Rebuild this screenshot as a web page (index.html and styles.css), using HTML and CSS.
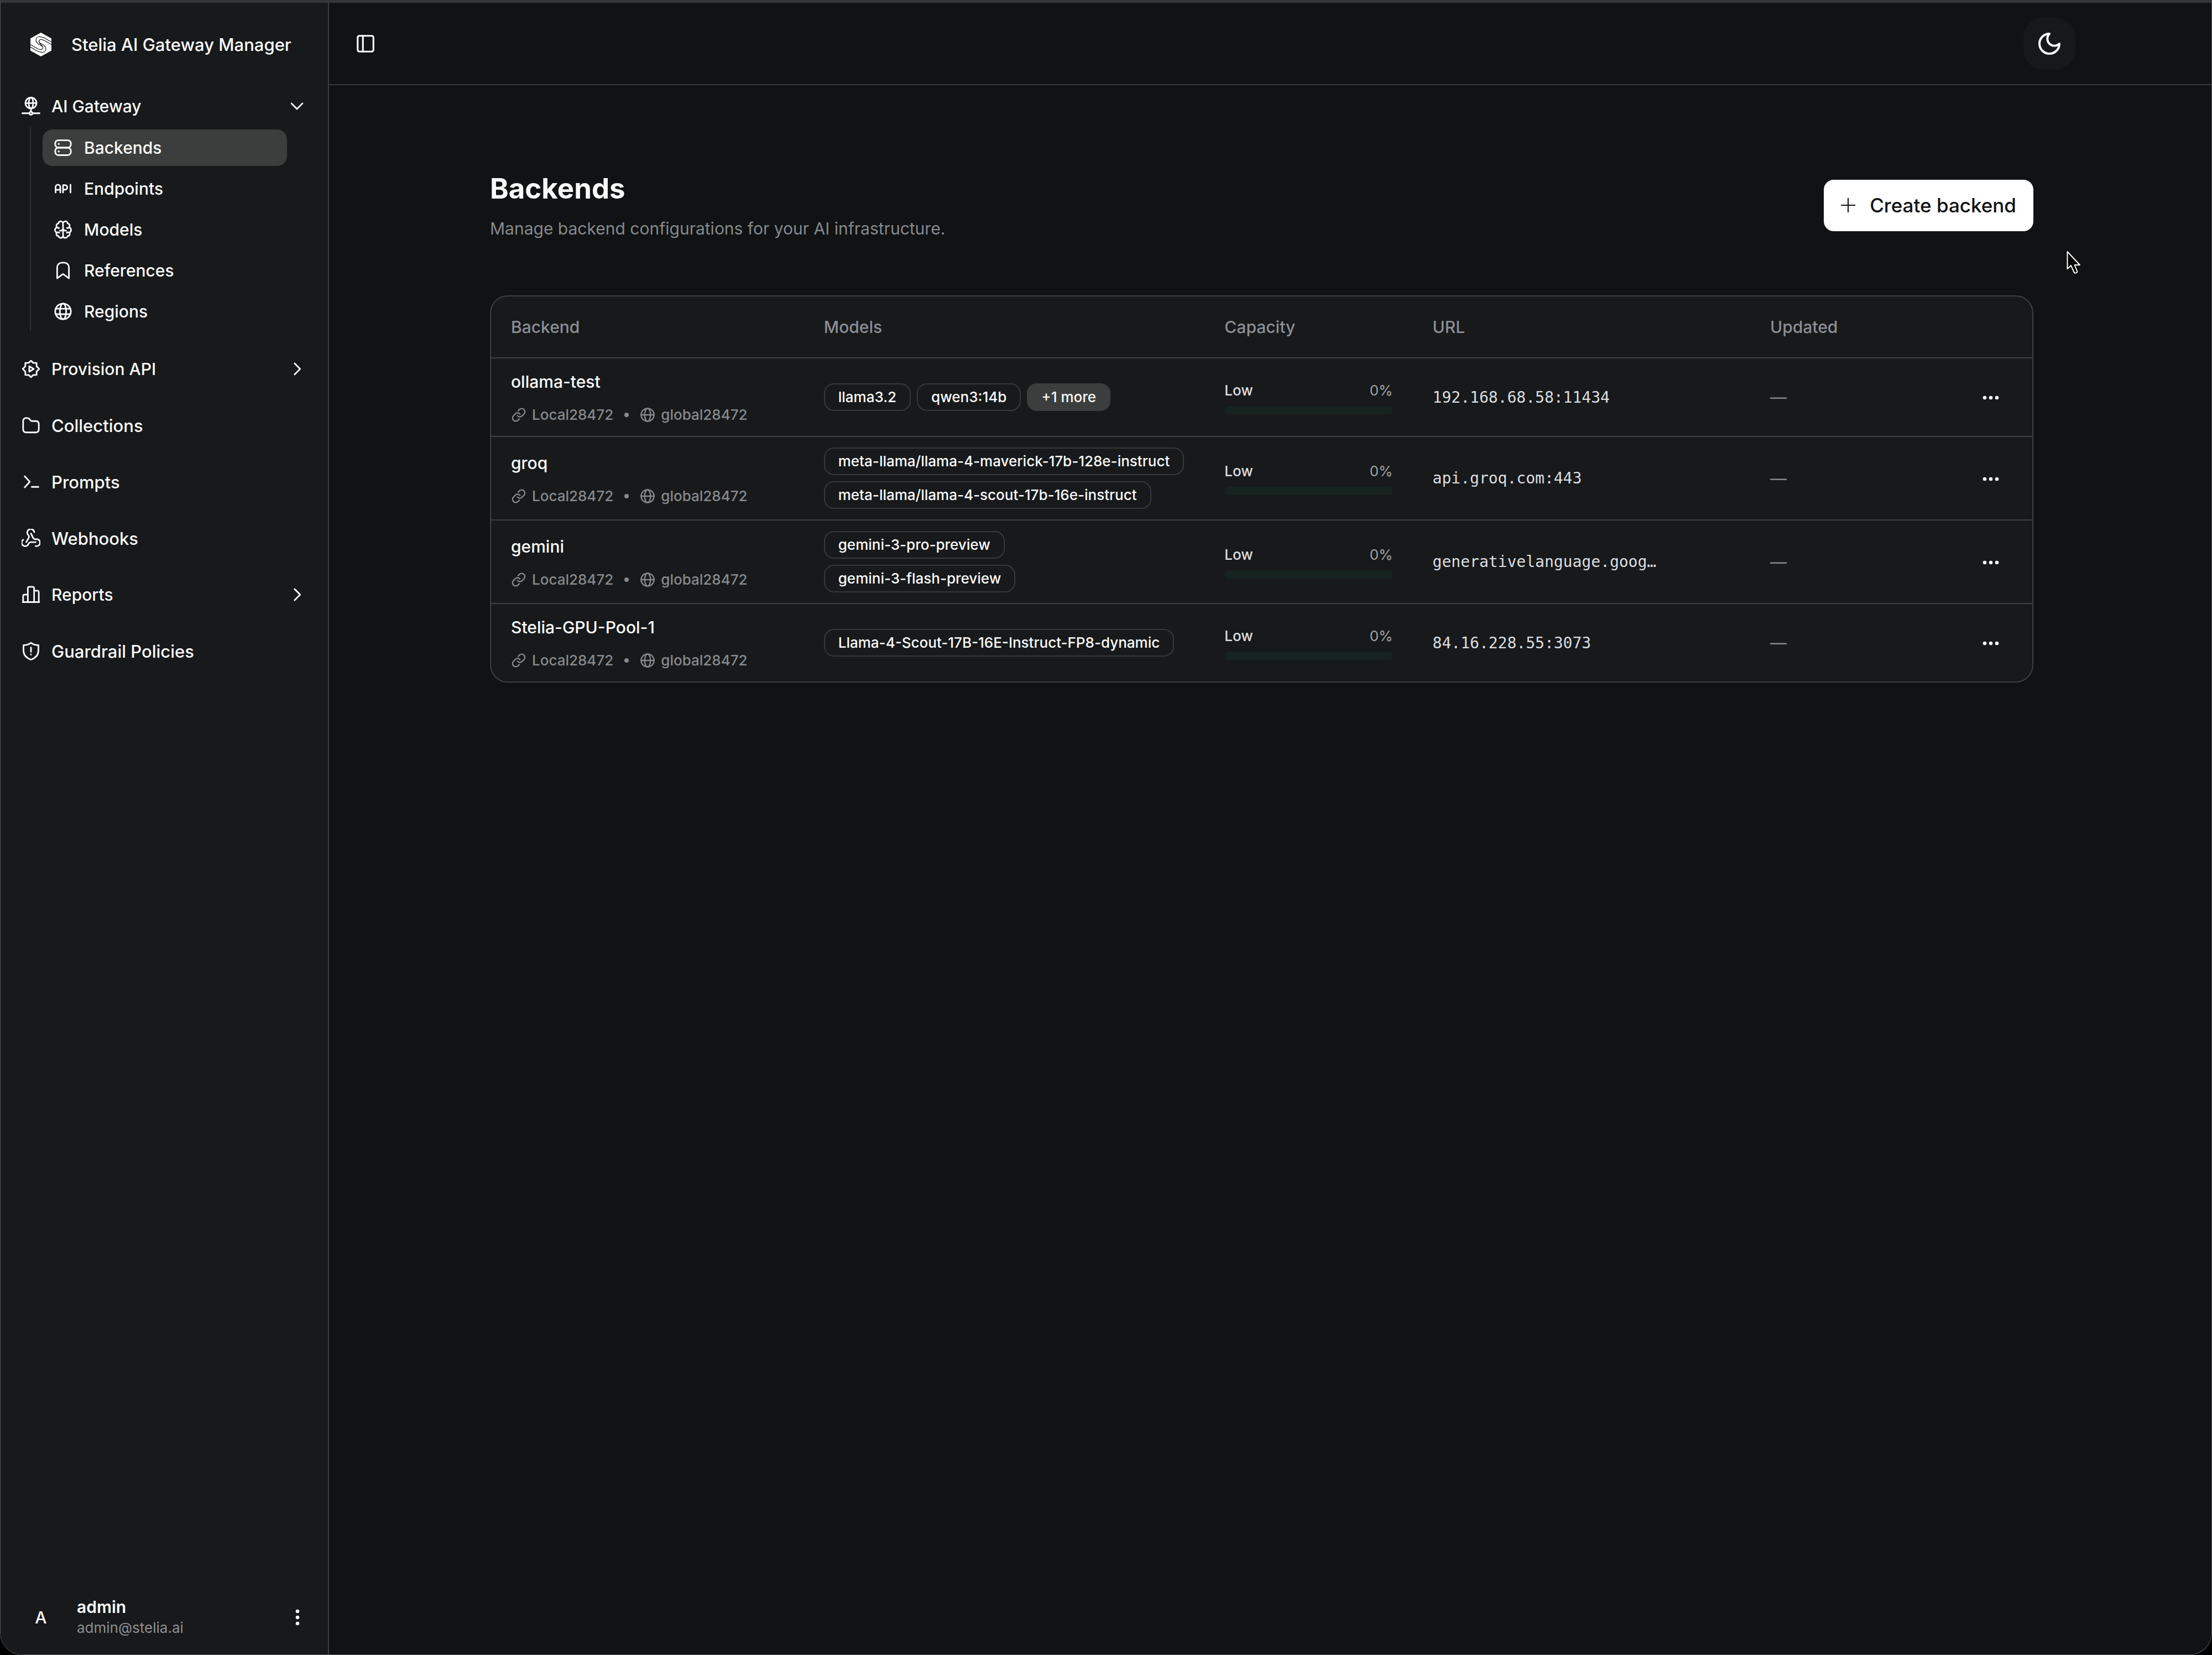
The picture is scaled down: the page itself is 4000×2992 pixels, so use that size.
FILE: index.html
```html
<!DOCTYPE html>
<html lang="en">
<head>
    <meta charset="UTF-8">
    <meta name="viewport" content="width=device-width, initial-scale=1.0">
    <title>Backends - Stelia AI Gateway Manager</title>
    <link rel="stylesheet" href="styles.css">
</head>
<body>

    <!-- shared icons -->
    <svg class="sprite" aria-hidden="true">
        <symbol id="i-right" viewBox="0 0 24 24"><path d="M9 5l7 7-7 7"/></symbol>
        <symbol id="i-link" viewBox="0 0 24 24"><path d="M10 13.2a4.8 4.8 0 0 0 7 .6l3.100-3.100a4.900 4.900 0 0 0-7-7l-2 2"/><path d="M14 10.800a4.800 4.800 0 0 0-7-.6l-3.100 3.100a4.900 4.900 0 0 0 7 7l2-2"/></symbol>
        <symbol id="i-globe" viewBox="0 0 24 24"><circle cx="12" cy="12" r="10"/><ellipse cx="12" cy="12" rx="4.500" ry="10"/><path d="M2 12h20"/></symbol>
        <symbol id="i-more" viewBox="0 0 36 36"><circle cx="7" cy="18" r="3.300"/><circle cx="18" cy="18" r="3.300"/><circle cx="29" cy="18" r="3.300"/></symbol>
        <symbol id="i-half-s" viewBox="0 0 40 43"><path d="M39 17L27 10Q12 3.500 11 13q0 5 5 8l7 4M39 21.500L26 14q-9-4-9.500 2 0 3 3.500 5"/></symbol>
    </svg>

    <div class="window">
        <aside class="sidebar">
            <div class="brand">
                <svg class="logo" viewBox="0 0 40 43">
                    <path class="logo-bg" d="M20 0l19 10.500v22L20 43 1 32.500v-22z"/>
                    <use href="#i-half-s"/>
                    <use href="#i-half-s" transform="rotate(180 20 21.500)"/>
                </svg>
                <span>Stelia AI Gateway Manager</span>
            </div>

            <nav class="nav">
                <div>
                    <button class="item" type="button" aria-expanded="true">
                        <svg class="icon" viewBox="0 0 24 24"><circle cx="12" cy="8" r="7"/><ellipse cx="12" cy="8" rx="2.800" ry="7"/><path d="M5 8h14M12 15V19M1 21H10M14 21h9"/><circle cx="12" cy="21" r="1.800"/></svg>
                        <span>AI Gateway</span>
                        <svg class="chevron" viewBox="0 0 24 24"><path d="M5 8.500l7 7 7-7"/></svg>
                    </button>
                    <ul class="sub">
                        <li><a class="sub-item active" href="#">
                            <svg class="icon" viewBox="0 0 24 24"><rect x="2" y="2.500" width="20" height="9.500" rx="4"/><rect x="2" y="12" width="20" height="9.500" rx="4"/><path d="M6.500 7.200v.1M6.500 16.700v.1" stroke-width="2.500"/></svg>
                            <span>Backends</span></a></li>
                        <li><a class="sub-item" href="#">
                            <svg class="icon" viewBox="0 0 24 24"><path d="M2.500 17v-7a3 3 0 0 1 6 0v7M2.500 13.500h6M12 17V7.500h2.500a2.900 2.900 0 0 1 0 5.800H12M21.500 7v10" stroke-width="2"/></svg>
                            <span>Endpoints</span></a></li>
                        <li><a class="sub-item" href="#">
                            <svg class="icon" viewBox="0 0 24 24"><path d="M12 4.500C12 .5 6 .5 6.200 4.200 3.500 4.500 2.800 7.500 4.200 9.200 1 10.500 1 14.500 4 15.800 2.500 18.500 4.500 20.500 6.200 20.300 7 23.500 12 23.500 12 19.500zM12 4.500C12 .5 18 .5 17.800 4.200 20.500 4.500 21.200 7.500 19.800 9.200 23 10.500 23 14.500 20 15.800 21.500 18.500 19.500 20.500 17.800 20.300 17 23.500 12 23.500 12 19.500M8 13.500q3.500 0 4-2.500.5 2.500 4 2.500M4.200 9.200q1 1 2.800.8M19.800 9.200q-1 1-2.800.8M4 15.800q1.500-.8 3.200.2M20 15.800q-1.500-.8-3.200.2"/></svg>
                            <span>Models</span></a></li>
                        <li><a class="sub-item" href="#">
                            <svg class="icon" viewBox="0 0 24 24"><path d="M4.500 22V8a6 6 0 0 1 6-6h3a6 6 0 0 1 6 6v14L12 16.500z"/></svg>
                            <span>References</span></a></li>
                        <li><a class="sub-item" href="#">
                            <svg class="icon" viewBox="0 0 24 24"><circle cx="12" cy="12" r="10"/><ellipse cx="12" cy="12" rx="4" ry="10"/><path d="M3 8.500h18M3 15.500h18"/></svg>
                            <span>Regions</span></a></li>
                    </ul>
                </div>
                <button class="item" type="button">
                    <svg class="icon" viewBox="0 0 24 24"><path d="M12 1.500l3 2.800h4.200v4.400L22.500 12l-3.300 3.300v4.400H15l-3 2.800-3-2.800H4.800v-4.400L1.500 12l3.300-3.300V4.300H9z"/><path d="M9.800 8.500v7L15.500 12z"/></svg>
                    <span>Provision API</span>
                    <svg class="chevron"><use href="#i-right"/></svg>
                </button>
                <a class="item" href="#">
                    <svg class="icon" viewBox="0 0 24 24"><path d="M2 7q0-4.500 4-4.500 3.500 0 4.500 2T13.500 6.500H18q4 0 4 4V17q0 4-4 4H6q-4 0-4-4z"/></svg>
                    <span>Collections</span>
                </a>
                <a class="item" href="#">
                    <svg class="icon" viewBox="0 0 24 24"><path d="M4 5l6.500 7L4 19M13 18.500h8.500"/></svg>
                    <span>Prompts</span>
                </a>
                <a class="item" href="#">
                    <svg class="icon" viewBox="0 0 24 24"><path d="M18 17h-6.500c-1.500 0-2 1-2.600 2A4.500 4.500 0 1 1 2 14"/><path d="M6 17l3.200-5.600c.7-1.200.2-2.300-.5-3.300A4.500 4.500 0 1 1 16.200 4.200"/><path d="M12 6l3 6c.7 1 1.500 1.300 2.700 1.400A4.500 4.500 0 1 1 18 22"/></svg>
                    <span>Webhooks</span>
                </a>
                <button class="item" type="button">
                    <svg class="icon" viewBox="0 0 24 24"><path d="M2 21.500V14q0-2 2-2h4v9.500M8 21.500V4q0-2 2-2h4q2 0 2 2v17.500M16 7h4q2 0 2 2v12.500M1.500 21.500h21"/></svg>
                    <span>Reports</span>
                    <svg class="chevron"><use href="#i-right"/></svg>
                </button>
                <a class="item" href="#">
                    <svg class="icon" viewBox="0 0 24 24"><path d="M12 1.500q4 3 9.500 3v7q0 8-9.500 11.500Q2.500 19.500 2.500 11.500v-7q5.500 0 9.500-3zM12 7.500V13M12 16.400v.1"/></svg>
                    <span>Guardrail Policies</span>
                </a>
            </nav>

            <div class="user">
                <span class="avatar">A</span>
                <div class="user-info">
                    <strong>admin</strong>
                    <small>admin@stelia.ai</small>
                </div>
                <button class="user-menu" type="button" aria-label="Account menu"><svg class="more vertical"><use href="#i-more"/></svg></button>
            </div>
        </aside>

        <div class="content">
            <header class="topbar">
                <button class="toggle" type="button" aria-label="Toggle sidebar">
                    <svg viewBox="0 0 24 24"><rect x="3" y="3" width="18" height="18" rx="2"/><path d="M9 3v18"/></svg>
                </button>
                <button class="theme" type="button" aria-label="Toggle theme">
                    <svg viewBox="0 0 24 24"><path d="M12 3a6 6 0 0 0 9 9 9 9 0 1 1-9-9Z"/></svg>
                </button>
            </header>

            <main class="page">
                <div class="page-head">
                    <div>
                        <h1>Backends</h1>
                        <p>Manage backend configurations for your AI infrastructure.</p>
                    </div>
                    <button class="create" type="button">
                        <svg viewBox="0 0 24 24"><path d="M12 0v24M0 12h24"/></svg>
                        <span>Create backend</span>
                    </button>
                </div>

                <div class="card">
                    <table>
                        <colgroup>
                            <col class="c-name"><col class="c-models"><col class="c-capacity"><col class="c-url"><col class="c-updated"><col class="c-menu">
                        </colgroup>
                        <thead>
                            <tr><th>Backend</th><th>Models</th><th>Capacity</th><th>URL</th><th>Updated</th><th></th></tr>
                        </thead>
                        <tbody id="rows"></tbody>
                    </table>
                </div>
            </main>
        </div>
    </div>

    <svg class="cursor" viewBox="0 0 26 42"><path d="M1.500 2v31l6.500-6 6 13q3.500 1.500 5.500-1.500L14.500 26H24z"/></svg>

    <script>
        const backends = [
            { name: 'ollama-test', models: ['llama3.2', 'qwen3:14b'], more: 1, url: '192.168.68.58:11434' },
            { name: 'groq', models: ['meta-llama/llama-4-maverick-17b-128e-instruct', 'meta-llama/llama-4-scout-17b-16e-instruct'], url: 'api.groq.com:443' },
            { name: 'gemini', models: ['gemini-3-pro-preview', 'gemini-3-flash-preview'], url: 'generativelanguage.goog…' },
            { name: 'Stelia-GPU-Pool-1', models: ['Llama-4-Scout-17B-16E-Instruct-FP8-dynamic'], url: '84.16.228.55:3073' }
        ];

        document.querySelector('#rows').innerHTML = backends.map(b => `
            <tr>
                <td>
                    <div class="name">${b.name}</div>
                    <div class="meta">
                        <svg><use href="#i-link"/></svg><span>Local28472</span>
                        <i class="dot"></i>
                        <svg><use href="#i-globe"/></svg><span>global28472</span>
                    </div>
                </td>
                <td>
                    <div class="chips ${b.more ? '' : 'stacked'}">
                        ${b.models.map(m => `<span class="chip">${m}</span>`).join('')}
                        ${b.more ? `<span class="chip filled">+${b.more} more</span>` : ''}
                    </div>
                </td>
                <td>
                    <div class="load"><span>Low</span><span class="percent">0%</span></div>
                    <div class="bar"></div>
                </td>
                <td class="url">${b.url}</td>
                <td class="updated">—</td>
                <td class="menu"><button type="button" aria-label="Actions for ${b.name}"><svg class="more"><use href="#i-more"/></svg></button></td>
            </tr>`).join('');
    </script>

</body>
</html>
```
FILE: styles.css
```css
* {
    margin: 0;
    padding: 0;
    box-sizing: border-box;
}

body {
    background: #000;
    color: #fafafa;
    font-family: Inter, "Liberation Sans", sans-serif;
    font-size: 30px;
    font-weight: 500;
}

button {
    background: none;
    border: none;
    color: inherit;
    font: inherit;
    cursor: pointer;
}

a {
    color: inherit;
    text-decoration: none;
}

ul {
    list-style: none;
}

svg {
    display: block;
    flex: none;
    fill: none;
    stroke: currentColor;
    stroke-width: 2;
    stroke-linecap: round;
    stroke-linejoin: round;
}

.sprite {
    position: absolute;
    width: 0;
    height: 0;
}

.window {
    display: flex;
    min-height: 100vh;
    background: #101213;
    border: 1px solid #55585a;
    border-top: 5px solid #343635;
    border-radius: 0 0 40px 40px;
    overflow: hidden;
}

/* sidebar */
.sidebar {
    display: flex;
    flex-direction: column;
    flex: none;
    width: 594px;
    background: #17191a;
    border-right: 2px solid #3c3e40;
}

.brand {
    display: flex;
    align-items: center;
    gap: 35px;
    height: 150px;
    padding: 0 0 0 53px;
    font-size: 31px;
}

.logo {
    width: 40px;
    height: 43px;
    stroke: #17191a;
    stroke-width: 1.2px;
}

.logo-bg {
    fill: #fff;
    stroke: none;
}

.nav {
    display: flex;
    flex-direction: column;
    gap: 36px;
    padding-top: 4px;
}

.item {
    display: flex;
    align-items: center;
    gap: 20px;
    width: 100%;
    height: 66px;
    padding: 0 39px 0 38px;
    text-align: left;
}

a.item {
    font-size: 31px;
}

.icon,
.chevron {
    width: 34px;
    height: 34px;
}

.chevron {
    margin-left: auto;
}

.sub {
    display: flex;
    flex-direction: column;
    gap: 8px;
    margin: 5px 74px 0 53px;
    padding: 4px 0 2px 21px;
    border-left: 2px solid #303234;
}

.sub-item {
    display: flex;
    align-items: center;
    gap: 21px;
    height: 66px;
    padding-left: 20px;
    border-radius: 18px;
}

.sub-item.active {
    background: #3c3e3d;
}

.user {
    display: flex;
    align-items: center;
    margin-top: auto;
    padding: 0 37px 29px 36px;
}

.avatar {
    width: 74px;
    text-align: center;
}

.user-info {
    display: flex;
    flex-direction: column;
    margin-left: 28px;
}

.user-info strong {
    font-weight: 600;
    line-height: 38px;
}

.user-info small {
    color: #8e9094;
    font-size: 26px;
    font-weight: 400;
    line-height: 38px;
}

.user-menu {
    margin-left: auto;
}

.more {
    width: 36px;
    height: 36px;
    fill: currentColor;
    stroke: none;
}

.vertical {
    transform: rotate(90deg);
}

/* top bar */
.content {
    flex: 1;
    min-width: 0;
}

.topbar {
    display: flex;
    align-items: center;
    justify-content: space-between;
    height: 149px;
    padding: 0 246px 0 47px;
    border-bottom: 2px solid #36383a;
}

.toggle svg {
    width: 38px;
    height: 38px;
}

.theme {
    padding: 23px;
    background: #16181a;
    border-radius: 36px;
}

.theme svg {
    width: 48px;
    height: 48px;
}

/* page */
.page {
    padding: 151px 322px 0 291px;
}

.page-head {
    display: flex;
    align-items: center;
    justify-content: space-between;
    margin-bottom: 97px;
}

h1 {
    font-size: 51px;
    font-weight: 700;
    line-height: 72px;
}

.page-head p {
    margin-top: 12px;
    color: #86898d;
    font-weight: 400;
    line-height: 48px;
}

.create {
    display: flex;
    align-items: center;
    gap: 26px;
    height: 93px;
    padding: 0 31px;
    background: #fff;
    border-radius: 18px;
    color: #101213;
    font-size: 35px;
}

.create svg {
    width: 26px;
    height: 26px;
    stroke-linecap: butt;
}

.card {
    background: #17191a;
    border: 2px solid #3d3f41;
    border-radius: 32px;
    overflow: hidden;
}

table {
    width: 100%;
    table-layout: fixed;
    border-collapse: collapse;
}

.c-name { width: 20.3%; }
.c-models { width: 26%; }
.c-capacity { width: 13.5%; }
.c-url { width: 21.9%; }
.c-menu { width: 5.4%; }

th {
    height: 111px;
    padding: 0 36px;
    color: #8b8e96;
    font-weight: 500;
    text-align: left;
}

td {
    padding: 19px 36px;
    border-top: 2px solid #3d3f41;
    white-space: nowrap;
}

.name {
    line-height: 46px;
}

.meta {
    display: flex;
    align-items: center;
    gap: 10px;
    margin-top: 18px;
    color: #86898d;
    font-size: 26px;
    line-height: 38px;
}

.meta svg {
    width: 28px;
    height: 28px;
}

.dot {
    width: 8px;
    height: 8px;
    margin: 0 10px;
    background: #86898d;
    border-radius: 50%;
}

.chips {
    display: flex;
    align-items: flex-start;
    gap: 11px;
}

.stacked {
    flex-direction: column;
}

.chip {
    padding: 0 24px;
    border: 2px solid #36383a;
    border-radius: 18px;
    font-size: 26px;
    line-height: 46px;
}

.filled {
    background: #3c3e3d;
    border-color: #3c3e3d;
}

.load {
    display: flex;
    justify-content: space-between;
    font-size: 26px;
    line-height: 36px;
    color: #dcdee0;
}

.percent {
    color: #a0a3a8;
    font-weight: 400;
}

.bar {
    height: 15px;
    margin-top: 10px;
    background: #16231f;
    border-radius: 8px;
}

.url {
    color: #dcdee0;
    font-family: "DejaVu Sans Mono", monospace;
    font-size: 28px;
    font-weight: 400;
}

.updated {
    color: #86898d;
    font-weight: 400;
}

.menu {
    text-align: center;
}

.menu button {
    vertical-align: middle;
}

/* pointer floats over the page */
.cursor {
    position: absolute;
    top: 453px;
    right: 237px;
    width: 26px;
    height: 42px;
    fill: #000;
    stroke: #fff;
}
```
